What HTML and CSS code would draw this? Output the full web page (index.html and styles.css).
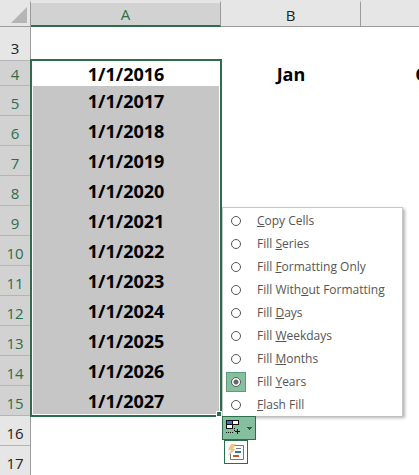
FILE: index.html
```html
<!DOCTYPE html>
<html lang="en">
<head>
  <meta charset="UTF-8">
  <title>Fill Years</title>
  <link rel="stylesheet" href="styles.css">
</head>
<body>

  <div class="sheet">
    <table class="grid">
      <colgroup>
        <col class="col-head">
        <col class="col-a">
        <col class="col-b">
        <col class="col-c">
      </colgroup>
      <thead>
        <tr>
          <td class="corner"><svg width="16" height="16" viewBox="0 0 16 16"><path d="M16 0V16H0Z" fill="#b5b5b5"/></svg></td>
          <th class="active">A</th>
          <th>B</th>
          <th></th>
        </tr>
      </thead>
      <tbody>
        <tr class="row-tall"><th>3</th><td></td><td></td><td></td></tr>
        <tr class="row-short selected first"><th>4</th><td>1/1/2016</td><td>Jan</td><td>Oct</td></tr>
        <tr class="selected"><th>5</th><td>1/1/2017</td><td></td><td></td></tr>
        <tr class="selected"><th>6</th><td>1/1/2018</td><td></td><td></td></tr>
        <tr class="selected"><th>7</th><td>1/1/2019</td><td></td><td></td></tr>
        <tr class="selected"><th>8</th><td>1/1/2020</td><td></td><td></td></tr>
        <tr class="selected"><th>9</th><td>1/1/2021</td><td></td><td></td></tr>
        <tr class="selected"><th>10</th><td>1/1/2022</td><td></td><td></td></tr>
        <tr class="selected"><th>11</th><td>1/1/2023</td><td></td><td></td></tr>
        <tr class="selected"><th>12</th><td>1/1/2024</td><td></td><td></td></tr>
        <tr class="selected"><th>13</th><td>1/1/2025</td><td></td><td></td></tr>
        <tr class="selected"><th>14</th><td>1/1/2026</td><td></td><td></td></tr>
        <tr class="selected"><th>15</th><td>1/1/2027</td><td></td><td></td></tr>
        <tr><th>16</th><td></td><td></td><td></td></tr>
        <tr><th>17</th><td></td><td></td><td></td></tr>
      </tbody>
    </table>

    <!-- Selection outline -->
    <div class="selection"><span class="handle"></span></div>

    <!-- Auto fill options -->
    <div class="autofill">
      <form class="menu">
        <label class="item"><span class="mark"><input type="radio" name="fill"></span><span><u>C</u>opy Cells</span></label>
        <label class="item"><span class="mark"><input type="radio" name="fill"></span><span>Fill <u>S</u>eries</span></label>
        <label class="item"><span class="mark"><input type="radio" name="fill"></span><span>Fill <u>F</u>ormatting Only</span></label>
        <label class="item"><span class="mark"><input type="radio" name="fill"></span><span>Fill With<u>o</u>ut Formatting</span></label>
        <label class="item"><span class="mark"><input type="radio" name="fill"></span><span>Fill <u>D</u>ays</span></label>
        <label class="item"><span class="mark"><input type="radio" name="fill"></span><span>Fill <u>W</u>eekdays</span></label>
        <label class="item"><span class="mark"><input type="radio" name="fill"></span><span>Fill <u>M</u>onths</span></label>
        <label class="item"><span class="mark checked"><input type="radio" name="fill" checked></span><span>Fill <u>Y</u>ears</span></label>
        <label class="item"><span class="mark"><input type="radio" name="fill"></span><span><u>F</u>lash Fill</span></label>
      </form>
      <button type="button" class="fill-button" aria-label="Auto Fill Options">
        <svg width="32" height="22" viewBox="0 0 32 22" shape-rendering="crispEdges">
          <path d="M3 3H16V8H9V12H3Z" fill="#fff"/>
          <path d="M4 4H9V7H4Z" fill="#3c6fd0"/>
          <path d="M3.5 3.5H15.5V7.5H3.5ZM9.5 3.5V7.5M3.5 7.5V11.5H9.5V7.5" fill="none" stroke="#111"/>
          <path d="M3 15.5H11M11.5 11V15" fill="none" stroke="#111" stroke-dasharray="1 1"/>
          <path d="M12 14.5H17M14.5 12V17" fill="none" stroke="#111"/>
          <path d="M24 10H29V11H28V12H27V13H26V12H25V11H24Z" fill="#2b5c43"/>
        </svg>
      </button>
      <button type="button" class="flash-button" aria-label="Flash Fill Options">
        <svg width="22" height="22" viewBox="0 0 22 22">
          <path d="M9 4.5H18.5V18.5H5.5V13" fill="#fff" stroke="#777"/>
          <path d="M6 3H11L8 8H11L3 15L6 9H3Z" fill="#f0c58a"/>
          <path d="M11 7.5H16" stroke="#777"/>
          <path d="M10 11H16" stroke="#2f75b5" stroke-width="2"/>
          <path d="M8 15H14" stroke="#c8552b" stroke-width="2"/>
        </svg>
      </button>
    </div>
  </div>

</body>
</html>
```
FILE: styles.css
```css
body {
  margin: 0;
  background-color: #fff;
  font-family: "Open Sans", "Noto Sans", sans-serif;
  overflow: hidden;
}
.sheet {
  position: relative;
  overflow: hidden;
}
.grid {
  width: 501px;
  table-layout: fixed;
  border-collapse: separate;
  border-spacing: 0;
}
.col-head {
  width: 31px;
}
.col-a {
  width: 190px;
}
.col-b, .col-c {
  width: 140px;
}
.grid th, .grid td {
  box-sizing: border-box;
  padding: 0;
  height: 30px;
  text-align: center;
  vertical-align: bottom;
}
.grid th {
  font-size: 15px;
  font-weight: normal;
  line-height: 22px;
  color: #222;
  background-color: #e6e6e6;
  border-right: 1px solid #9b9b9b;
}
.grid td {
  font-size: 18px;
  font-weight: bold;
  line-height: 24px;
  padding-bottom: 3px;
  color: #000;
}
.grid thead th, .grid thead .corner {
  height: 27px;
  border-top: 3px solid #e6e6e6;
  border-bottom: 1px solid #9b9b9b;
}
.grid thead .active {
  color: #2b6e4b;
  background-color: #d2d2d2;
  border-bottom: 2px solid #2b6e4b;
}
.grid .corner {
  background-color: #e6e6e6;
  border-right: 1px solid #9b9b9b;
  line-height: 0;
  text-align: right;
  padding: 0 3px 3px 0;
}
.grid tbody th {
  padding-bottom: 1px;
  border-bottom: 1px solid #b5b5b5;
}
.grid .row-tall th, .grid .row-tall td {
  height: 34px;
}
.grid .row-short th, .grid .row-short td {
  height: 25px;
  padding-bottom: 0;
}
.grid .selected th {
  color: #2b6e4b;
  background-color: #d2d2d2;
}
.grid .selected td:nth-child(2) {
  background-color: #c6c6c6;
}
.grid .first td:nth-child(2) {
  background-color: #fff;
}

/* Outline over A4:A15 */
.selection {
  position: absolute;
  left: 30px;
  top: 59px;
  box-sizing: border-box;
  width: 192px;
  height: 358px;
  border: 2px solid #2b6e4b;
  box-shadow: inset 0 0 0 1px #fff;
}
.handle {
  position: absolute;
  right: -2px;
  bottom: -2px;
  width: 4px;
  height: 4px;
  background-color: #2b6e4b;
  border: 1px solid #fff;
}

.autofill {
  position: absolute;
  left: 222px;
  top: 207px;
  display: flex;
  flex-direction: column;
  align-items: flex-start;
}
.menu {
  width: 179px;
  padding-top: 1px;
  background-color: #fff;
  border: 1px solid #c6c6c6;
  border-bottom-width: 0;
  box-shadow: 2px 2px 3px rgba(0, 0, 0, 0.3);
}
.item {
  display: flex;
  align-items: center;
  gap: 11px;
  height: 23px;
  padding-left: 3px;
  font-size: 12px;
  line-height: 18px;
  color: #555;
}
.mark {
  box-sizing: border-box;
  display: flex;
  align-items: center;
  justify-content: center;
  width: 20px;
  height: 20px;
}
.mark.checked {
  background-color: #86bf9f;
  border: 1px solid #5a9c79;
}
.mark input {
  appearance: none;
  box-sizing: border-box;
  width: 10px;
  height: 10px;
  margin: 0;
  border: 1px solid #555;
  border-radius: 50%;
  background-color: #fff;
}
.mark input:checked {
  background-image: radial-gradient(circle, #666 2px, #fff 3px);
}
.fill-button, .flash-button {
  box-sizing: border-box;
  padding: 0;
  line-height: 0;
  border: 1px solid #2b6e4b;
}
.fill-button {
  position: relative;
  width: 34px;
  height: 24px;
  background-color: #86bf9f;
}
.flash-button {
  width: 24px;
  height: 24px;
  margin-left: 2px;
  background-color: #fff;
}
.fill-button svg, .flash-button svg {
  display: block;
}
```
